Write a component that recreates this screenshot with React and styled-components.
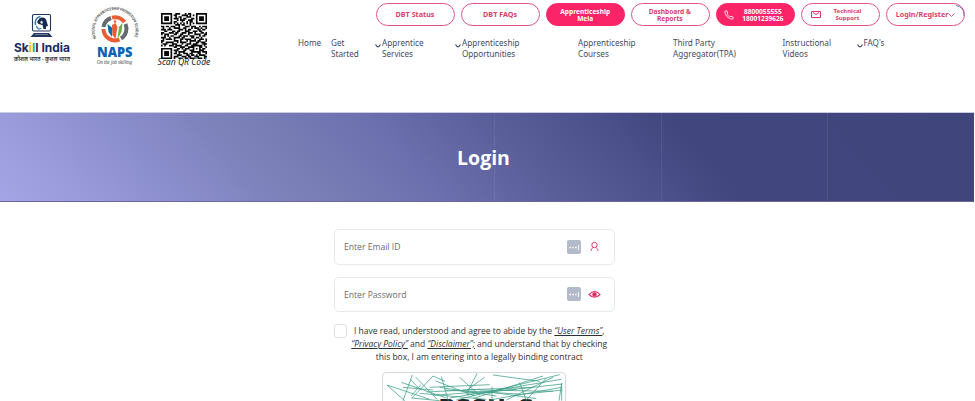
import React from 'react';
import styled, { createGlobalStyle } from 'styled-components';

const Global = createGlobalStyle`
  * { box-sizing: border-box; }
  body { margin: 0; background: #fff; font-family: "Open Sans", "Noto Sans", sans-serif; overflow: hidden; }
`;

const Page = styled.div`width: 975px; height: 401px; overflow: hidden; background: #fff;`;
const Header = styled.header`height: 112px; display: flex;`;
const Logos = styled.div`width: 298px; display: flex; align-items: flex-start; flex: none;`;
const SkillLogo = styled.svg`width: 66px; height: 54px; margin: 12px 0 0 9px; flex: none;`;
const NapsLogo = styled.svg`width: 60px; height: 68px; margin-left: 10px; flex: none;`;
const QrBlock = styled.div`
  margin: 12.500px 0 0 12px; width: 54px; display: flex; flex-direction: column; align-items: center;
  font: italic 8.6px/10px "Noto Sans", sans-serif; color: #222; white-space: nowrap;
`;
const QrCode = styled.svg`width: 46px; height: 46px; flex: none; display: block;`;
const QrLabel = styled.span`margin-top: -1.500px;`;

const Right = styled.div`flex: 1; min-width: 0;`;
const Pills = styled.div`display: flex; gap: 6.1px; margin: 3px 0 0 77.5px;`;
const Pill = styled.button`
  position: relative;
  width: 79px; height: 23px; flex: none; padding: 0 ${p => p.$pad || 0}px 0 0; border-radius: 12px;
  border: 1px solid ${p => (p.$filled ? '#fb2468' : '#e0557f')};
  background: ${p => (p.$filled ? '#fb2468' : '#fff')};
  color: ${p => (p.$filled ? '#fff' : '#dc3b6b')};
  font: 700 ${p => p.$size || 7.2}px/7px "Noto Sans", sans-serif;
  display: flex; align-items: center; justify-content: center; gap: ${p => p.$gap || 0}px;
  text-align: center; white-space: nowrap;
`;
const PillIcon = styled.svg`
  width: ${p => p.$w || 10}px; height: ${p => p.$h || 10}px; flex: none;
  fill: none; stroke: currentColor; overflow: visible;
`;
const LoadingArc = styled.svg`
  position: absolute; right: -1px; top: 0; width: 10px; height: 13px;
  fill: none; stroke: #6f7fc4; stroke-width: 1;
`;

const Nav = styled.nav`
  display: grid; grid-template-columns: 33px 44px 80px 123px 95px 109.5px 74px 60px; margin-top: 10.500px;
`;
const NavItem = styled.a`
  color: #434a63; font: 400 8.15px/11.6px "Noto Sans", sans-serif; white-space: nowrap; display: flex;
`;
const Caret = styled.svg`width: 6px; height: 4px; margin: 7.5px 1px 0 0; fill: none; stroke: #434a63; stroke-width: 1.2; flex: none;`;

const Banner = styled.section`
  width: 974px; height: 90px; display: flex; align-items: center; justify-content: center;
  border-top: 1px solid #c9cbe4; border-bottom: 1px solid #6a67a0;
  background:
    linear-gradient(90deg, transparent 494px, #ffffff10 494px, #ffffff10 495px, transparent 495px, transparent 661px, #ffffff12 661px, #ffffff12 662px, transparent 662px, transparent 827px, #ffffff12 827px, #ffffff12 828px, transparent 828px),
    linear-gradient(48deg, #a3a5e6 0%, #9a9bda 8%, #8a8dcb 18%, #8084be 25%, #797eb6 31%, #6c70ae 42%, #595d98 54%, #4b4f8a 64%, #41467e 71%, #40467c 100%);
`;
const Title = styled.h1`margin: 1px 7px 0 0; font: 700 19.5px/26px "Open Sans", sans-serif; color: #fff;`;

const Form = styled.form`width: 281.500px; margin: 27px 0 0 333.5px; display: flex; flex-direction: column;`;
const Field = styled.label`
  height: ${p => p.$h}px; margin-bottom: 12px; border: 1px solid #e5ebee; border-radius: 5px;
  display: flex; align-items: center; padding: 0 13.500px 0 9.5px; color: #6b6b6b;
  font: 400 8.6px/12px "Open Sans", sans-serif;
`;
const FieldText = styled.span`flex: 1;`;
const FieldIcon = styled.svg`width: 13px; height: 13px; margin: -1px 0 0 6.500px; flex: none;`;
const KeyBadge = styled.svg`width: 14px; height: 14px; flex: none; margin-top: -1px;`;

const Agreement = styled.div`display: flex;`;
const Checkbox = styled.span`width: 13px; height: 14px; border: 1px solid #dde1e5; border-radius: 3px; flex: none;`;
const Terms = styled.p`
  margin: -0.5px 4px 0 1px; flex: 1; text-align: center; white-space: nowrap; color: #303030;
  font: 400 8.5px/13px "Open Sans", sans-serif;
`;
const TermLink = styled.a`font-style: italic; text-decoration: underline;`;
const Captcha = styled.div`
  width: 184px; height: 60px; margin: 9px 0 0 48.500px; border: 1px solid #d5d8dc; border-radius: 4px;
  background: #fff; overflow: hidden;
`;
const CaptchaArt = styled.svg`width: 182px; height: 58px; display: block;`;

const QR_ROWS = [
  '11111110011100010110001111111',
  '10000010110001111010101000001',
  '10111010010110001110001011101',
  '10111010111010110001101011101',
  '10111010001011100111001011101',
  '10000010110001001011001000001',
  '11111110101010101010101111111',
  '00000000011101100010000000000',
  '11011011100100011101110010111',
  '01000100111100110001011101001',
  '11101110000111010110000110110',
  '00110001101100011100111011000',
  '11000111011001110111010001101',
  '10111000110011000100011110011',
  '00101011000110111011100010110',
  '11100100111101100001101101000',
  '01011110100011011110010011101',
  '11000000111010001011110110001',
  '10011111001011110010001101110',
  '01110001110001001110111000111',
  '10100111011110011001111111010',
  '00000000110011100111100011001',
  '11111110001101011100101010110',
  '10000010111000110011100011100',
  '10111010010111100001111110111',
  '10111010110100111011000110001',
  '10111010001110001101101011110',
  '10000010111001110110011100011',
  '11111110100110011011100111010',
];

const qrPath = QR_ROWS.map((row, y) =>
  [...row].map((c, x) => (c === '1' ? `M${x} ${y}h1.05v1.05h-1.05z` : '')).join('')
).join('');

const Chevron = () => <Caret viewBox="0 0 6 4"><path d="M.5 .5Q3 5.300 5.500 .5" /></Caret>;

const Password = () => (
  <KeyBadge viewBox="0 0 14 14">
    <rect width="14" height="14" rx="2" fill="#b3bac9" />
    <path d="M2.3 7.500h1.5M5.2 7.500h1.5M8.1 7.500h1.5" stroke="#fff" strokeWidth="1.4" />
    <path d="M11.5 5v5" stroke="#fff" strokeWidth=".9" />
  </KeyBadge>
);

const SkillIndia = () => (
  <SkillLogo viewBox="0 0 66 54">
    <rect x="23.5" y="2.500" width="18" height="16.500" rx="1.2" fill="#fff" stroke="#24365b" strokeWidth="1.1" />
    <path d="M26.500 13c-1-4 1-8 5-8.500" fill="none" stroke="#3c7fae" strokeWidth="1.6" />
    <path d="M30 7c2-2.500 7-2 7.500 2l1.500 5-2 .5v2.500h-2.500l-1-4-4-1-1.500-2z" fill="#17294d" />
    <path d="M31 10l2-1.500 1 2.500-1.500 1z" fill="#dfe9f2" />
    <path d="M27 14l2.500 3 3-.5" fill="none" stroke="#3c7fae" strokeWidth="1.2" />
    <path d="M25 21h15l3.500 4h-22z" fill="#24365b" /><path d="M26 22.500h13" stroke="#aab4c6" strokeWidth=".6" />
    <text x="5" y="39.500" fontFamily="Inter, sans-serif" fontSize="11.2" fontWeight="700" fill="#1e2760" textLength="56" lengthAdjust="spacingAndGlyphs">Sk<tspan fill="#efb72d">i</tspan><tspan fill="#39a66b">l</tspan>l India</text>
    <text x="5" y="48.500" fontFamily="Noto Sans, Noto Sans Devanagari, sans-serif" fontSize="5.500" fontWeight="600" fill="#333" textLength="56" lengthAdjust="spacingAndGlyphs">कौशल भारत - कुशल भारत</text>
  </SkillLogo>
);

const Naps = () => (
  <NapsLogo viewBox="0 0 60 68">
    <defs><path id="napsArc" d="M11.300 38.500A20.500 20.500 0 1 1 48.900 38.500" /></defs>
    <text fontFamily="Liberation Sans" fontSize="4" fontWeight="700" fill="#444"><textPath href="#napsArc" textLength="79" lengthAdjust="spacingAndGlyphs">NATIONAL APPRENTICESHIP PROMOTION SCHEME</textPath></text>
    <g fill="none" strokeWidth="4">
      <path d="M18.500 27A11.500 11.500 0 0 1 26 18" stroke="#666b70" />
      <path d="M27 17.700A11.500 11.500 0 0 1 39.500 22" stroke="#e95d34" />
      <path d="M40.500 24A11.500 11.500 0 0 1 36 38.500" stroke="#666b70" />
      <path d="M34.500 39.500A11.500 11.500 0 0 1 18.500 29" stroke="#e95d34" />
    </g>
    <path d="M22.500 24l5 4-.5 9-3.500-5z" fill="#1767ad" /><path d="M27 25l3.500-2 2 4-2 12-3-4z" fill="#e95d34" /><path d="M34 27l3.500-4-1 9-4 7z" fill="#69ad45" />
    <circle cx="30" cy="21.500" r="1.3" fill="#e95d34" />
    <text x="12" y="56.500" fontFamily="Open Sans" fontSize="14.500" fontWeight="800" fill="#0864b0" textLength="35.500" lengthAdjust="spacingAndGlyphs">NAPS</text>
    <text x="12" y="63.800" fontFamily="Liberation Serif" fontStyle="italic" fontSize="5.300" fill="#333" textLength="35" lengthAdjust="spacingAndGlyphs">On the job skilling</text>
  </NapsLogo>
);

const CaptchaImage = () => (
  <Captcha>
    <CaptchaArt viewBox="10 9 546 174">
      <text y="138" fontFamily="DejaVu Sans, sans-serif" fontSize="70" fontWeight="700" fill="#1d2427">
        <tspan x="176">P</tspan><tspan x="226">S</tspan><tspan x="274">S</tspan><tspan x="322">U</tspan><tspan x="414">S</tspan>
      </text>
      <path
        fill="none" stroke="#3f9f89" strokeWidth="2.3"
        d="M22 45 150 88M22 45 75 92M98 15 70 92M65 37 200 84M97 84 160 18 196 34M108 21 172 88M94 78 124 44M185 20 206 92M92 28 122 60M168 33 285 78M150 52 330 44M140 66 300 58M292 10 262 70M240 22 300 76M315 22 262 60M340 15 480 34M195 60 420 72M160 76 410 58M210 84 545 28M230 90 540 14M260 74 548 42M280 86 490 18M300 60 520 64M330 90 546 52M337 50 337 92M420 38 440 92M500 24 440 90M546 40 546 92M546 40 538 92M180 52 350 78M250 60 460 52M380 90 520 22M70 52 160 60M400 76 548 60M95 84 180 92M120 70 320 88M330 66 470 86"
      />
    </CaptchaArt>
  </Captcha>
);

export default function App() {
  return (
    <Page>
      <Global />
      <Header>
        <Logos>
          <SkillIndia />
          <Naps />
          <QrBlock>
            <QrCode viewBox="0 0 29 29"><path d={qrPath} fill="#080808" /></QrCode>
            <QrLabel>Scan QR Code</QrLabel>
          </QrBlock>
        </Logos>
        <Right>
          <Pills>
            <Pill>DBT Status</Pill>
            <Pill>DBT FAQs</Pill>
            <Pill $filled $size={6.6}>Apprenticeship<br />Mela</Pill>
            <Pill $size={6.6} $pad={1}>Dashboard &amp;<br />Reports</Pill>
            <Pill $filled $gap={8} $size={6.6} $pad={3}>
              <PillIcon viewBox="0 0 24 24" strokeWidth="2"><path d="M22 17v3a2 2 0 0 1-2 2C10 21 3 14 2 4a2 2 0 0 1 2-2h3l2 6-2 2c2 3 4 5 7 7l2-2z" /></PillIcon>
              <span>8800055555<br />18001239626</span>
            </Pill>
            <Pill $gap={13} $size={6} $pad={9}>
              <PillIcon viewBox="0 0 10 7" $h={7}><path d="M.5.500h9v6h-9zM2 1.500 5 3.500 8 1.500" /></PillIcon>
              <span>Technical<br />Support</span>
            </Pill>
            <Pill>
              Login/Register
              <PillIcon viewBox="0 0 7 4" $w={7} $h={4} strokeWidth=".8"><path d="M.5.500 3.500 3.500 6.500.500" /></PillIcon>
              <LoadingArc viewBox="0 0 10 13"><path d="M1 1.500Q9.500 3 9 12" /></LoadingArc>
            </Pill>
          </Pills>
          <Nav>
            <NavItem>Home</NavItem>
            <NavItem>Get<br />Started</NavItem>
            <NavItem><Chevron />Apprentice<br />Services</NavItem>
            <NavItem><Chevron />Apprenticeship<br />Opportunities</NavItem>
            <NavItem>Apprenticeship<br />Courses</NavItem>
            <NavItem>Third Party<br />Aggregator(TPA)</NavItem>
            <NavItem>Instructional<br />Videos</NavItem>
            <NavItem><Chevron />FAQ's</NavItem>
          </Nav>
        </Right>
      </Header>
      <Banner><Title>Login</Title></Banner>
      <Form>
        <Field $h={36}>
          <FieldText>Enter Email ID</FieldText><Password />
          <FieldIcon viewBox="0 0 13 13" fill="none" stroke="#e5396d" strokeWidth="1"><circle cx="6.500" cy="5" r="2.700" /><path d="M3 11c0-2 1-3 2.500-3.500M10 11c0-2-1-3-2.500-3.500" /></FieldIcon>
        </Field>
        <Field $h={35}>
          <FieldText>Enter Password</FieldText><Password />
          <FieldIcon viewBox="0 0 13 13" fill="none" stroke="#e02e61" strokeWidth="1.1"><path d="M1 6.500Q6.500.500 12 6.500 6.500 12 1 6.500z" /><circle cx="6.500" cy="6.500" r="1.700" fill="#e02e61" /></FieldIcon>
        </Field>
        <Agreement>
          <Checkbox />
          <Terms>
            I have read, understood and agree to abide by the <TermLink>“User Terms”</TermLink>,<br />
            <TermLink>“Privacy Policy”</TermLink> and <TermLink>“Disclaimer”;</TermLink> and understand that by checking<br />
            this box, I am entering into a legally binding contract
          </Terms>
        </Agreement>
        <CaptchaImage />
      </Form>
    </Page>
  );
}
